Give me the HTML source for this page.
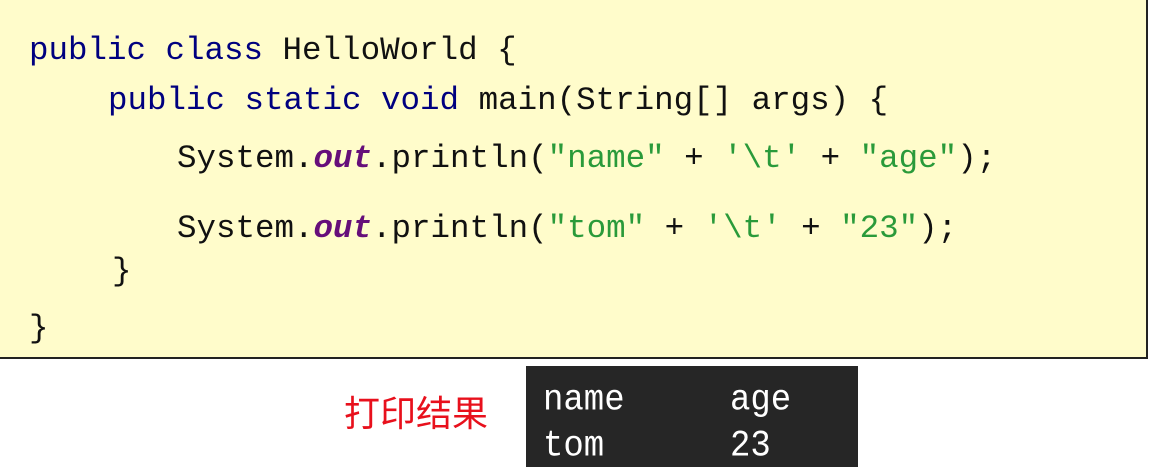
<!DOCTYPE html>
<html><head><meta charset="utf-8"><style>
html,body{margin:0;padding:0;width:1157px;height:467px;background:#fff;overflow:hidden;position:relative}
#box{position:absolute;left:0;top:0;width:1146px;height:357px;background:#fffccb;border-right:2px solid #222;border-bottom:2px solid #222}
.l{position:absolute;font-family:"Liberation Mono",monospace;font-size:32.5px;line-height:1;white-space:pre;color:#111}
.k{color:#00007f}.s{color:#2a9a3a}.o{color:#660e7a;font-weight:bold;font-style:italic}
#out{position:absolute;left:526px;top:366px;width:332px;height:101px;background:#262626}
.w{position:absolute;font-family:"Liberation Mono",monospace;font-size:34px;color:#fff;line-height:1;transform:scaleY(1.08);transform-origin:0 100%}
#lbl{position:absolute;left:344px;top:396px;font-family:"Liberation Sans","Noto Sans CJK SC",sans-serif;font-size:36px;color:#e8101c;line-height:1}
</style></head><body>
<div id="box"></div>
<div class="l" style="left:29px;top:35px"><span class="k">public class</span> HelloWorld {</div>
<div class="l" style="left:108px;top:85px"><span class="k">public static void</span> main(String[] args) {</div>
<div class="l" style="left:177px;top:143px">System.<span class="o">out</span>.println(<span class="s">"name"</span> + <span class="s">'\t'</span> + <span class="s">"age"</span>);</div>
<div class="l" style="left:177px;top:213px">System.<span class="o">out</span>.println(<span class="s">"tom"</span> + <span class="s">'\t'</span> + <span class="s">"23"</span>);</div>
<div class="l" style="left:112px;top:256px">}</div>
<div class="l" style="left:29px;top:313px">}</div>
<div id="out"></div>
<div class="w" style="left:543px;top:385px">name</div>
<div class="w" style="left:730px;top:385px">age</div>
<div class="w" style="left:543px;top:431px">tom</div>
<div class="w" style="left:730px;top:431px">23</div>
<div id="lbl">打印结果</div>
</body></html>
